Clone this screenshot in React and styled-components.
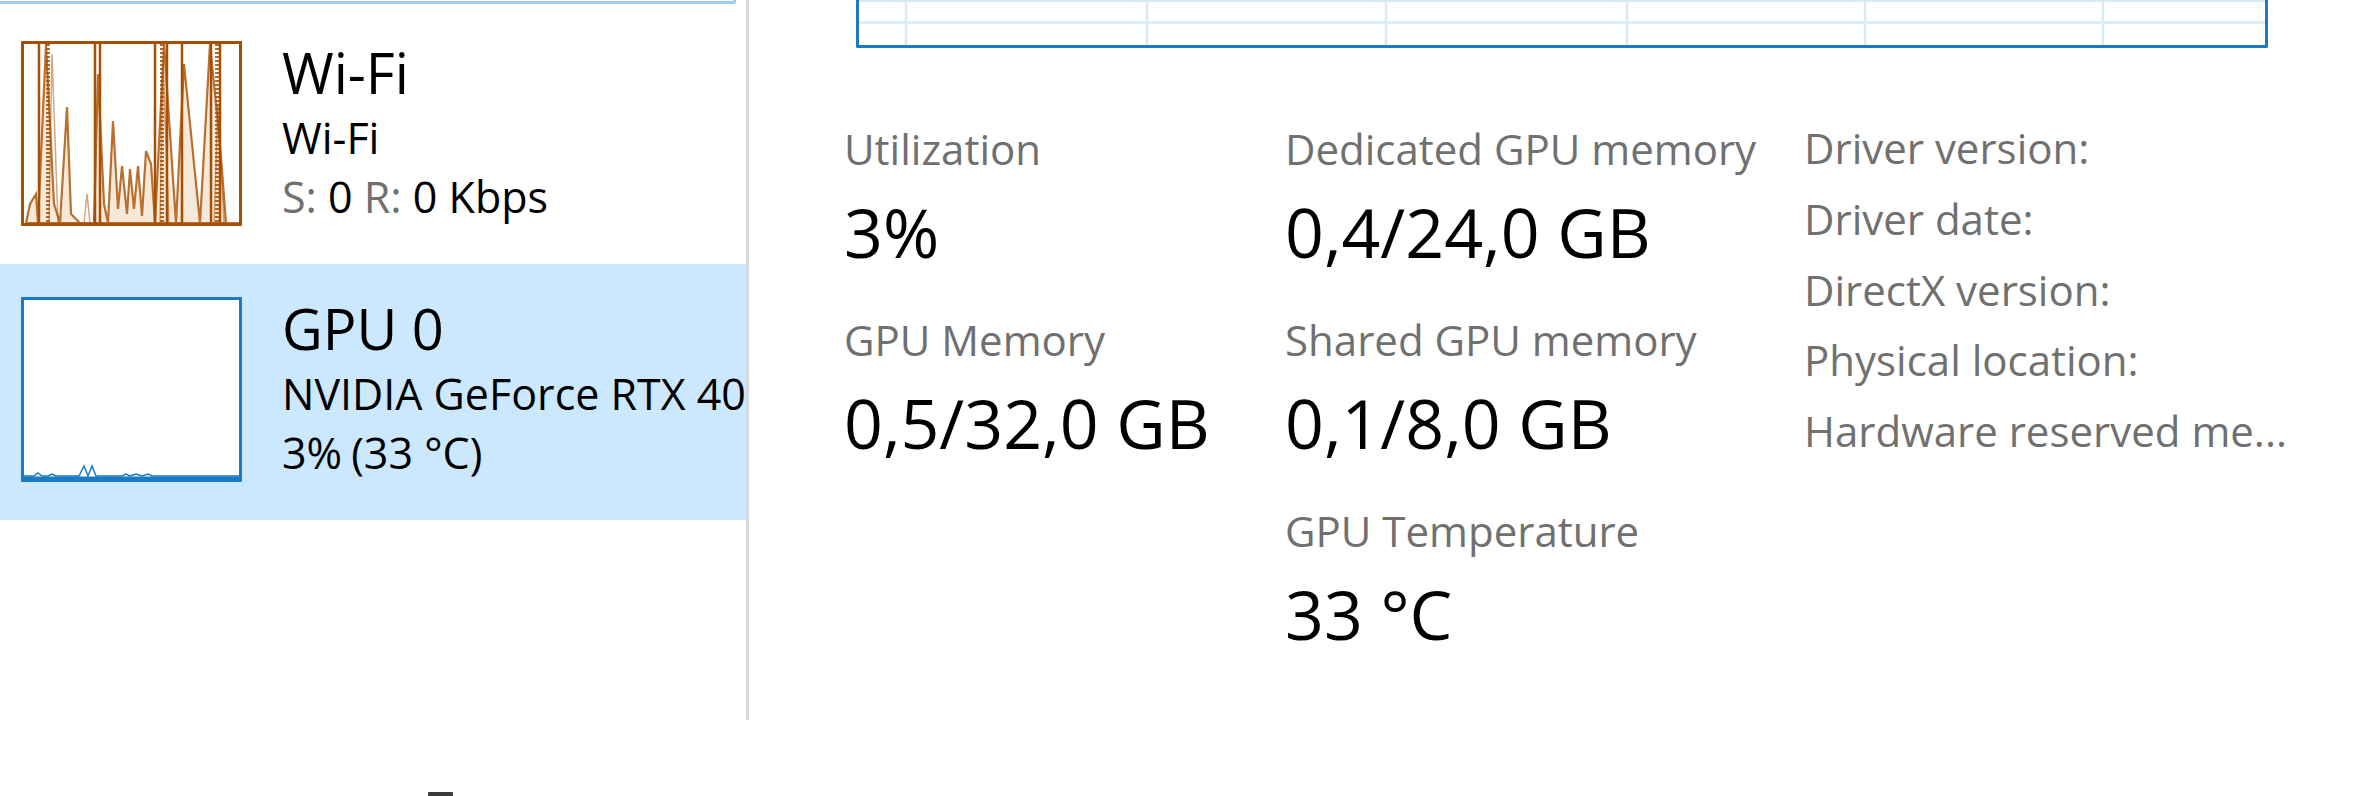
import React from "react";
import styled, { createGlobalStyle } from "styled-components";

const Global = createGlobalStyle`
  html, body { margin: 0; padding: 0; background: #ffffff; }
  body { font-family: "Open Sans", "Noto Sans", sans-serif; color: #000; }
  * { box-sizing: border-box; }
`;

const Page = styled.div`
  width: 2355px;
  height: 796px;
  overflow: hidden;
  display: flex;
  flex-direction: column;
  background: #fff;
`;

const Main = styled.div`
  display: flex;
  height: 720px;
`;

const Sidebar = styled.aside`
  width: 749px;
  flex: none;
  height: 100%;
  border-right: 3px solid #dadada;
  overflow: hidden;
  display: flex;
  flex-direction: column;
`;

const PrevItem = styled.div`
  width: 736px;
  height: 4px;
  margin-bottom: 4px;
  border-bottom: 3px solid #a3cdee;
  border-right: 3px solid #a3cdee;
  border-bottom-right-radius: 2px;
`;

const Item = styled.div`
  height: 256px;
  display: flex;
  gap: 40px;
  padding-left: 21px;
  background: ${(p) => (p.$selected ? "#cce8ff" : "transparent")};
  white-space: nowrap;
`;

const ChartBox = styled.div`
  flex: none;
  width: 221px;
  height: 185px;
  margin-top: 33px;
  border: 3px solid ${(p) => p.$color};
  background: #fff;
  border-radius: 1px;
  overflow: hidden;
  svg { display: block; width: 100%; height: 100%; }
`;

const ItemText = styled.div`
  padding-top: 28px;
  display: flex;
  flex-direction: column;
`;

const ItemTitle = styled.div`
  font-size: 56px;
  line-height: 72px;
  color: #000;
`;

const ItemLine = styled.div`
  font-size: 43px;
  line-height: 59px;
  color: #000;
`;

const Dim = styled.span`
  color: #707070;
`;

const Paren = styled.span`
  margin-left: 9px;
`;

const Panel = styled.section`
  flex: 1;
  padding-left: 95px;
  display: flex;
  flex-direction: column;
`;

const GraphBox = styled.div`
  margin-left: 12px;
  width: 1412px;
  height: 48px;
  border: 3px solid #1a7bc4;
  border-top: none;
  border-radius: 0 0 2px 2px;
  overflow: hidden;
  svg { display: block; width: 100%; height: 100%; }
`;

const StatsGrid = styled.div`
  margin-top: 65px;
  display: grid;
  grid-template-columns: 441px 519px 560px;
  align-items: start;
`;

const StatColumn = styled.div`
  padding-top: 8px;
  display: flex;
  flex-direction: column;
  gap: 40px;
`;

const Stat = styled.div`
  display: flex;
  flex-direction: column;
  gap: 14px;
`;

const StatLabel = styled.div`
  font-size: 42px;
  line-height: 56px;
  color: #707070;
  white-space: nowrap;
`;

const StatValue = styled.div`
  font-size: 68px;
  line-height: 81px;
  color: #000;
  white-space: nowrap;
`;

const InfoList = styled.div`
  display: flex;
  flex-direction: column;
`;

const InfoLabel = styled.div`
  font-size: 42px;
  line-height: 70.75px;
  color: #707070;
  white-space: nowrap;
`;

const Footer = styled.div`
  flex: 1;
  display: flex;
  align-items: flex-end;
  padding-left: 428px;
`;

const FooterMark = styled.span`
  width: 25px;
  height: 4px;
  background: #3a3a3a;
  border-radius: 1px 1px 0 0;
`;

const WIFI = "#a74f01";
const BLUE = "#1a7bc4";

function WifiChart() {
  const bars = [15, 71, 76, 131, 143, 158, 187, 196];
  const dotted = [24, 138, 193];
  return (
    <svg viewBox="0 0 215 179" preserveAspectRatio="none">
      <path
        d="M2 179 L6 160 L12 150 L14 179 L22 0 L30 160 L36 179 L43 63 L47 170 L52 175 L56 179 L70 179 L74 30 L80 160 L84 179 L89 77 L94 165 L98 122 L103 170 L106 125 L110 165 L114 122 L118 172 L122 107 L127 120 L131 179 L140 0 L152 179 L160 20 L176 179 L186 0 L190 40 L196 100 L202 179 L215 179 Z"
        fill="#f4dfcb"
        fillOpacity="0.7"
        stroke={WIFI}
        strokeWidth="2.2"
        strokeOpacity="0.8"
      />
      <path
        d="M25 179 L28 10 L34 179 M60 179 L63 150 L66 179 M136 179 L139 20 L145 179 M190 179 L194 60 L200 179"
        fill="none"
        stroke={WIFI}
        strokeWidth="1.5"
        strokeOpacity="0.5"
      />
      {dotted.map((x) => (
        <line key={"d" + x} x1={x} y1="0" x2={x} y2="179" stroke={WIFI} strokeWidth="4" strokeDasharray="2 2" strokeOpacity="0.85" />
      ))}
      {bars.map((x) => (
        <line key={x} x1={x} y1="0" x2={x} y2="179" stroke={WIFI} strokeWidth="2.5" />
      ))}
    </svg>
  );
}

function GpuChart() {
  return (
    <svg viewBox="0 0 215 179" preserveAspectRatio="none">
      <path
        d="M0 176 L10 176 L14 173 L18 176 L24 176 L28 174 L32 176 L55 176 L60 166 L64 176 L68 166 L72 176 L98 176 L102 174 L106 176 L112 174 L118 176 L124 174 L128 176 L140 176 L215 176"
        fill="none"
        stroke={BLUE}
        strokeWidth="1.5"
      />
      <line x1="0" y1="178" x2="215" y2="178" stroke={BLUE} strokeWidth="3" />
    </svg>
  );
}

function GridGraph() {
  const vx = [47, 288, 527, 768, 1006, 1244];
  return (
    <svg viewBox="0 0 1406 48" preserveAspectRatio="none">
      <line x1="0" y1="1" x2="1406" y2="1" stroke="#d9eaf7" strokeWidth="2" />
      <line x1="0" y1="24" x2="1406" y2="24" stroke="#d9eaf7" strokeWidth="2.5" />
      {vx.map((x) => (
        <line key={x} x1={x} y1="0" x2={x} y2="48" stroke="#d9eaf7" strokeWidth="2.5" />
      ))}
    </svg>
  );
}

export default function App() {
  return (
    <Page>
      <Global />
      <Main>
        <Sidebar>
          <PrevItem />
          <Item>
            <ChartBox $color={WIFI}>
              <WifiChart />
            </ChartBox>
            <ItemText>
              <ItemTitle>Wi-Fi</ItemTitle>
              <ItemLine>Wi-Fi</ItemLine>
              <ItemLine>
                <Dim>S:</Dim> 0 <Dim>R:</Dim> 0 Kbps
              </ItemLine>
            </ItemText>
          </Item>
          <Item $selected>
            <ChartBox $color={BLUE}>
              <GpuChart />
            </ChartBox>
            <ItemText>
              <ItemTitle>GPU 0</ItemTitle>
              <ItemLine>NVIDIA GeForce RTX 40</ItemLine>
              <ItemLine>
                3%<Paren>(33 °C)</Paren>
              </ItemLine>
            </ItemText>
          </Item>
        </Sidebar>
        <Panel>
          <GraphBox>
            <GridGraph />
          </GraphBox>
          <StatsGrid>
            <StatColumn>
              <Stat>
                <StatLabel>Utilization</StatLabel>
                <StatValue>3%</StatValue>
              </Stat>
              <Stat>
                <StatLabel>GPU Memory</StatLabel>
                <StatValue>0,5/32,0 GB</StatValue>
              </Stat>
            </StatColumn>
            <StatColumn>
              <Stat>
                <StatLabel>Dedicated GPU memory</StatLabel>
                <StatValue>0,4/24,0 GB</StatValue>
              </Stat>
              <Stat>
                <StatLabel>Shared GPU memory</StatLabel>
                <StatValue>0,1/8,0 GB</StatValue>
              </Stat>
              <Stat>
                <StatLabel>GPU Temperature</StatLabel>
                <StatValue>33 °C</StatValue>
              </Stat>
            </StatColumn>
            <InfoList>
              <InfoLabel>Driver version:</InfoLabel>
              <InfoLabel>Driver date:</InfoLabel>
              <InfoLabel>DirectX version:</InfoLabel>
              <InfoLabel>Physical location:</InfoLabel>
              <InfoLabel>Hardware reserved me...</InfoLabel>
            </InfoList>
          </StatsGrid>
        </Panel>
      </Main>
      <Footer>
        <FooterMark />
      </Footer>
    </Page>
  );
}
